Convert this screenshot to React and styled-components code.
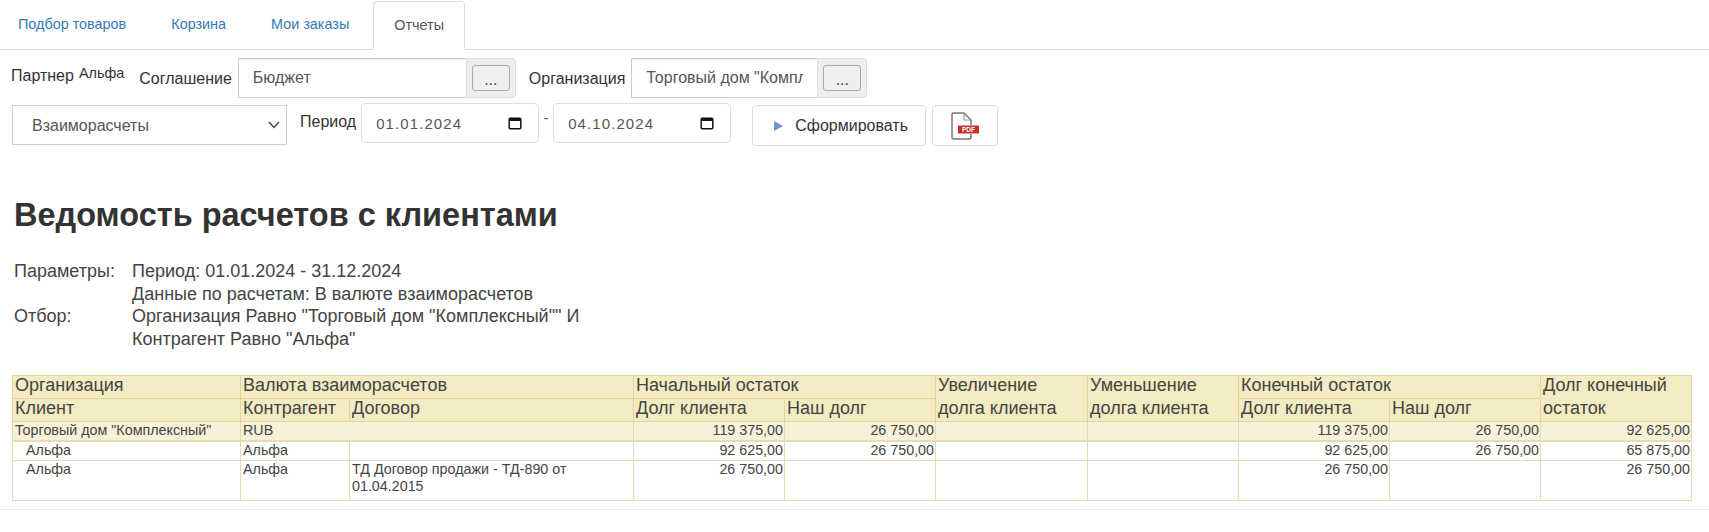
import React from "react";
import styled, { createGlobalStyle } from "styled-components";

const Global = createGlobalStyle`
  html, body { margin: 0; padding: 0; background: #fff; }
  body { font-family: "Liberation Sans", Arial, sans-serif; color: #333; font-size: 14px; }
`;

const Page = styled.div`
  width: 1709px;
  display: flex;
  flex-direction: column;
`;

const TabBar = styled.nav`
  display: flex;
  height: 49px;
  box-sizing: content-box;
  border-bottom: 1px solid #ddd;
`;

const Tab = styled.a`
  box-sizing: border-box;
  height: 48px;
  margin-top: 1px;
  margin-right: 1px;
  padding: 0 ${(p) => p.$pr || 22}px 2px ${(p) => p.$pl || 22}px;
  display: flex;
  align-items: center;
  font-size: 14.4px;
  color: ${(p) => (p.$active ? "#555" : "#337ab7")};
  background: #fff;
  ${(p) =>
    p.$active &&
    `border: 1px solid #ddd; border-bottom-color: #fff; border-radius: 4px 4px 0 0; height: 49px; margin-bottom: -1px; margin-left: 1px;`}
`;

const Toolbar = styled.div`
  display: flex;
  flex-direction: column;
`;

const FirstRow = styled.div`
  display: flex;
  align-items: flex-start;
  height: 40px;
  margin: 8px 0 0 11px;
`;

const SecondRow = styled.div`
  display: flex;
  align-items: flex-start;
  height: 42px;
  margin: 6px 0 0 12px;
`;

const Label = styled.span`
  font-size: 16px;
  line-height: 20px;
  color: #333;
  margin: ${(p) => p.$m || "0"};
`;

const Partner = styled.span`
  font-size: 14.4px;
  line-height: 18px;
  color: #333;
  margin: 6px 15px 0 5px;
`;

const LookupGroup = styled.div`
  display: flex;
  height: 40px;
  width: ${(p) => p.$w}px;
  margin-left: 6px;
`;

const LookupInput = styled.input`
  flex: 1;
  min-width: 0;
  box-sizing: border-box;
  height: 40px;
  padding: 0 14px;
  border: 1px solid #ccc;
  border-right: 0;
  background: #fff;
  outline: none;
  font: 16px "Liberation Sans", Arial, sans-serif;
  color: #555;
  box-shadow: inset 0 1px 1px rgba(0, 0, 0, 0.075);
`;

const Addon = styled.div`
  width: 50px;
  height: 40px;
  box-sizing: border-box;
  background: #eee;
  border: 1px solid #ddd;
  border-radius: 0 4px 4px 0;
  display: flex;
  align-items: center;
  justify-content: center;
`;

const DotsButton = styled.button`
  width: 38px;
  height: 26px;
  padding: 0;
  box-sizing: border-box;
  border: 1px solid #aaa;
  border-radius: 3px;
  background: #efefef;
  color: #444;
  font: 16px "Liberation Sans", Arial, sans-serif;
  line-height: 28px;
`;

const SelectBox = styled.div`
  position: relative;
  width: 275px;
  height: 40px;
  margin: 1px 13px 0 0;
`;

const Select = styled.select`
  appearance: none;
  width: 100%;
  height: 100%;
  box-sizing: border-box;
  padding: 0 19px;
  border: 1px solid #ccc;
  background: #fff;
  font: 16px "Liberation Sans", Arial, sans-serif;
  color: #555;
  outline: none;
`;

const Chevron = styled.svg`
  position: absolute;
  right: 7px;
  top: 15px;
  pointer-events: none;
`;

const DateField = styled.div`
  width: 178px;
  height: 40px;
  box-sizing: border-box;
  margin-top: -1px;
  padding: 0 16px 0 14px;
  display: flex;
  align-items: center;
  justify-content: space-between;
  border: 1px solid #ddd;
  border-radius: 4px;
  font-size: 15px;
  letter-spacing: 1.1px;
  color: #555;
`;

const Dash = styled.span`
  width: 14px;
  text-align: center;
  font-size: 14px;
  line-height: 20px;
  color: #555;
  margin-top: 4px;
`;

const Button = styled.button`
  height: 41px;
  width: ${(p) => p.$w}px;
  margin: 1px 0 0 ${(p) => p.$ml}px;
  padding: 0 0 0 ${(p) => p.$pl || 0}px;
  box-sizing: border-box;
  display: flex;
  align-items: center;
  justify-content: center;
  gap: 11px;
  border: 1px solid #ddd;
  border-radius: 4px;
  background: #fff;
  color: #333;
  font: 16px "Liberation Sans", Arial, sans-serif;
`;

const Report = styled.section`
  padding: 0 0 0 14px;
  margin-top: 51px;
`;

const Title = styled.h1`
  margin: 0;
  font-size: 32.5px;
  line-height: 36px;
  font-weight: 700;
  color: #333;
`;

const Params = styled.div`
  display: grid;
  grid-template-columns: 118px 460px;
  margin-top: 27px;
  font-size: 18px;
  line-height: 22.5px;
  color: #444;
`;

const ReportTable = styled.table`
  table-layout: fixed;
  border-collapse: collapse;
  width: 1679px;
  margin: 25px 0 0 -2px;
  font-size: 14.3px;
  color: #444;
`;

const Th = styled.th`
  background: #f3ebc1;
  border: 1px solid #e0d49c;
  font-weight: 400;
  font-size: 18px;
  line-height: 18px;
  text-align: left;
  vertical-align: top;
  padding: 0 2px;
  height: 23px;
  box-sizing: border-box;
  color: #444;
`;

const HeadStack = styled.span`
  display: block;
  margin-top: -2px;
  line-height: 23px;
`;

const Td = styled.td`
  background: ${(p) => (p.$group ? "#f6f1d8" : "#fff")};
  border: 1px solid #e6dcae;
  ${(p) => p.$group && "border-bottom: 2px solid #e6dcae;"}
  text-align: ${(p) => (p.$num ? "right" : "left")};
  vertical-align: top;
  padding: 0 ${(p) => (p.$wrap ? 30 : 1)}px 0 ${(p) => (p.$indent ? 13 : 2)}px;
  line-height: ${(p) => (p.$group ? 16 : 17)}px;
  height: ${(p) => p.$h}px;
  box-sizing: border-box;
`;

const BottomRule = styled.hr`
  margin: 8px 0 0;
  border: 0;
  border-top: 1px solid #e7e7e7;
`;

const widths = [228, 109, 284, 151, 151, 152, 151, 151, 151, 151];

const CalendarIcon = () => (
  <svg width="14" height="14" viewBox="0 0 14 14" fill="none" aria-hidden="true">
    <rect x="1.2" y="2.2" width="11.6" height="10.6" rx="1" stroke="#111" strokeWidth="1.5" />
    <rect x="1" y="2" width="12" height="3" fill="#111" />
  </svg>
);

const PlayIcon = () => (
  <svg width="11" height="12" viewBox="0 0 11 12" aria-hidden="true">
    <path d="M1 1 L10 6 L1 11 Z" fill="#6c93d6" />
  </svg>
);

const PdfIcon = () => (
  <svg width="28" height="28" viewBox="0 0 28 28" fill="none" aria-hidden="true">
    <path d="M1 13 V2.5 a1.5 1.5 0 0 1 1.5-1.5 H13 L20 8 V13" stroke="#777" strokeWidth="1.5" />
    <path d="M13 1 V8 H20" stroke="#999" strokeWidth="1.2" />
    <path d="M1 21 V25.5 a1.5 1.5 0 0 0 1.5 1.5 H18.5 a1.5 1.5 0 0 0 1.5-1.5 V22" stroke="#777" strokeWidth="1.5" />
    <path d="M1 13 V21" stroke="#777" strokeWidth="1.5" />
    <rect x="7" y="13.5" width="21" height="8" rx="0.6" fill="#c9302c" />
    <text x="17.5" y="20" fontSize="6.5" fontWeight="700" fill="#fff" textAnchor="middle" fontFamily="Liberation Sans, sans-serif">PDF</text>
  </svg>
);

const ChevronIcon = () => (
  <Chevron width="12" height="10" viewBox="0 0 12 10" fill="none" aria-hidden="true">
    <path d="M1 2 L6 7.5 L11 2" stroke="#444" strokeWidth="1.5" />
  </Chevron>
);

const rows = [
  { group: true, h: 19, a: "Торговый дом \"Комплексный\"", b: "RUB", merge: true, n: ["119 375,00", "26 750,00", "", "", "119 375,00", "26 750,00", "92 625,00"] },
  { h: 20, a: "Альфа", b: "Альфа", c: "", n: ["92 625,00", "26 750,00", "", "", "92 625,00", "26 750,00", "65 875,00"] },
  { h: 40, a: "Альфа", b: "Альфа", c: "ТД Договор продажи - ТД-890 от 01.04.2015", n: ["26 750,00", "", "", "", "26 750,00", "", "26 750,00"] },
];

export default function App() {
  return (
    <Page>
      <Global />
      <TabBar>
        <Tab $pl={18}>Подбор товаров</Tab>
        <Tab>Корзина</Tab>
        <Tab>Мои заказы</Tab>
        <Tab $active $pl={20} $pr={20}>Отчеты</Tab>
      </TabBar>
      <Toolbar>
        <FirstRow>
          <Label $m="8px 0 0 0">Партнер</Label>
          <Partner>Альфа</Partner>
          <Label $m="11px 0 0 0">Соглашение</Label>
          <LookupGroup $w={278}>
            <LookupInput readOnly value="Бюджет" />
            <Addon><DotsButton>...</DotsButton></Addon>
          </LookupGroup>
          <Label $m="11px 0 0 13px">Организация</Label>
          <LookupGroup $w={236}>
            <LookupInput readOnly value={'Торговый дом "Комплексный"'} />
            <Addon><DotsButton>...</DotsButton></Addon>
          </LookupGroup>
        </FirstRow>
        <SecondRow>
          <SelectBox>
            <Select defaultValue="Взаиморасчеты">
              <option>Взаиморасчеты</option>
            </Select>
            <ChevronIcon />
          </SelectBox>
          <Label $m="8px 5px 0 0">Период</Label>
          <DateField>01.01.2024<CalendarIcon /></DateField>
          <Dash>-</Dash>
          <DateField>04.10.2024<CalendarIcon /></DateField>
          <Button $w={174} $ml={21} $pl={3}><PlayIcon />Сформировать</Button>
          <Button $w={66} $ml={6}><PdfIcon /></Button>
        </SecondRow>
      </Toolbar>
      <Report>
        <Title>Ведомость расчетов с клиентами</Title>
        <Params>
          <span>Параметры:</span>
          <span>Период: 01.01.2024 - 31.12.2024</span>
          <span />
          <span>Данные по расчетам: В валюте взаиморасчетов</span>
          <span>Отбор:</span>
          <span>Организация Равно "Торговый дом "Комплексный"" И Контрагент Равно "Альфа"</span>
        </Params>
        <ReportTable>
          <colgroup>
            {widths.map((w, i) => <col key={i} style={{ width: w }} />)}
          </colgroup>
          <thead>
            <tr>
              <Th>Организация</Th>
              <Th colSpan={2}>Валюта взаиморасчетов</Th>
              <Th colSpan={2}>Начальный остаток</Th>
              <Th rowSpan={2}><HeadStack>Увеличение долга клиента</HeadStack></Th>
              <Th rowSpan={2}><HeadStack>Уменьшение долга клиента</HeadStack></Th>
              <Th colSpan={2}>Конечный остаток</Th>
              <Th rowSpan={2}><HeadStack>Долг конечный остаток</HeadStack></Th>
            </tr>
            <tr>
              <Th>Клиент</Th>
              <Th>Контрагент</Th>
              <Th>Договор</Th>
              <Th>Долг клиента</Th>
              <Th>Наш долг</Th>
              <Th>Долг клиента</Th>
              <Th>Наш долг</Th>
            </tr>
          </thead>
          <tbody>
            {rows.map((r, i) => (
              <tr key={i}>
                <Td $group={r.group} $h={r.h} $indent={!r.group}>{r.a}</Td>
                {r.merge ? (
                  <Td $group $h={r.h} colSpan={2}>{r.b}</Td>
                ) : (
                  <>
                    <Td $h={r.h}>{r.b}</Td>
                    <Td $h={r.h} $wrap>{r.c}</Td>
                  </>
                )}
                {r.n.map((v, j) => (
                  <Td key={j} $num $group={r.group} $h={r.h}>{v}</Td>
                ))}
              </tr>
            ))}
          </tbody>
        </ReportTable>
      </Report>
      <BottomRule />
    </Page>
  );
}
